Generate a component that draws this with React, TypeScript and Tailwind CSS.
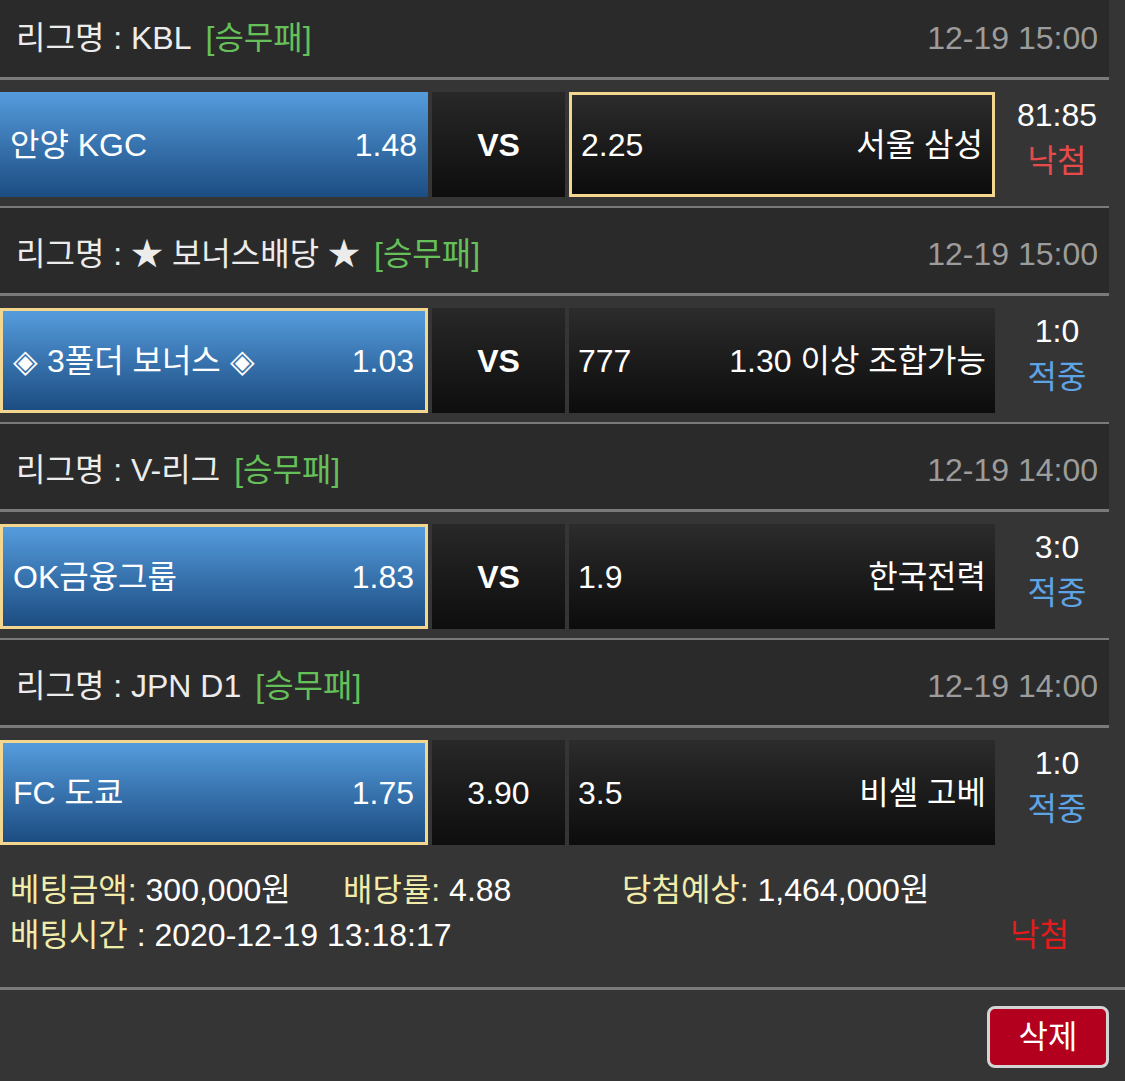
// Bet slip detail: league headers, match rows with picked side, totals and delete button.

type Side = "home" | "away" | "none";

interface Match {
  league: string;
  time: string;
  home: string;
  homeOdds: string;
  mid: string;
  midBold: boolean;
  awayOdds: string;
  away: string;
  picked: Side;
  score: string;
  result: "win" | "lose";
}

const matches: Match[] = [
  {
    league: "KBL",
    time: "12-19 15:00",
    home: "안양 KGC",
    homeOdds: "1.48",
    mid: "VS",
    midBold: true,
    awayOdds: "2.25",
    away: "서울 삼성",
    picked: "away",
    score: "81:85",
    result: "lose",
  },
  {
    league: "★ 보너스배당 ★",
    time: "12-19 15:00",
    home: "◈ 3폴더 보너스 ◈",
    homeOdds: "1.03",
    mid: "VS",
    midBold: true,
    awayOdds: "777",
    away: "1.30 이상 조합가능",
    picked: "home",
    score: "1:0",
    result: "win",
  },
  {
    league: "V-리그",
    time: "12-19 14:00",
    home: "OK금융그룹",
    homeOdds: "1.83",
    mid: "VS",
    midBold: true,
    awayOdds: "1.9",
    away: "한국전력",
    picked: "home",
    score: "3:0",
    result: "win",
  },
  {
    league: "JPN D1",
    time: "12-19 14:00",
    home: "FC 도쿄",
    homeOdds: "1.75",
    mid: "3.90",
    midBold: false,
    awayOdds: "3.5",
    away: "비셀 고베",
    picked: "home",
    score: "1:0",
    result: "win",
  },
];

const FONT = { fontFamily: '"Liberation Sans", "Noto Sans CJK KR", sans-serif' };

function LeagueHeader({ m }: { m: Match }) {
  return (
    <div className="flex h-[85px] w-[1109px] items-center justify-between bg-[#2a2a2a] pl-[16px] pr-[11px] pt-[6px]">
      <div className="text-[#ececec]">
        리그명 : {m.league}
        <span className="ml-[14px] text-[#66c05a]">[승무패]</span>
      </div>
      <div className="text-[#9c9c9c]">{m.time}</div>
    </div>
  );
}

function MatchRow({ m }: { m: Match }) {
  const homePicked = m.picked === "home";
  const awayPicked = m.picked === "away";
  return (
    <div className="flex h-[126px] gap-1 pt-3">
      <div
        className={
          "flex h-[105px] w-[428px] items-center justify-between bg-gradient-to-b from-[#559cdd] to-[#1c4d82] pl-[10px] pr-[11px] text-white " +
          (homePicked ? "border-[3px] border-[#f4d78e]" : "")
        }
      >
        <span>{m.home}</span>
        <span>{m.homeOdds}</span>
      </div>
      <div className="flex h-[105px] w-[133px] items-center justify-center bg-gradient-to-b from-[#282828] to-[#0e0e0e] text-white">
        <span className={m.midBold ? "font-bold" : ""}>{m.mid}</span>
      </div>
      <div
        className={
          "flex h-[105px] w-[426px] items-center justify-between bg-gradient-to-b from-[#2c2c2c] to-[#0c0c0c] pl-[9px] pr-[9px] text-white " +
          (awayPicked ? "border-[3px] border-[#f4d78e]" : "")
        }
      >
        <span>{m.awayOdds}</span>
        <span>{m.away}</span>
      </div>
      <div className="flex h-[105px] w-[116px] flex-col items-center leading-[46px]">
        <span className="text-white">{m.score}</span>
        <span className={m.result === "win" ? "text-[#5ea3e4]" : "text-[#e64a4a]"}>
          {m.result === "win" ? "적중" : "낙첨"}
        </span>
      </div>
    </div>
  );
}

export default function App() {
  return (
    <div className="h-[1081px] w-[1125px] overflow-hidden bg-[#353535] text-[32px] leading-none" style={FONT}>
      <div className="-mt-2">
        {matches.map((m, i) => (
          <div key={i}>
            {i > 0 && <div className="h-[2px] w-[1109px] bg-[#7a7a7a]" />}
            <LeagueHeader m={m} />
            <div className="h-[3px] w-[1109px] bg-[#7a7a7a]" />
            <MatchRow m={m} />
          </div>
        ))}
      </div>

      <div className="pl-[10px] pt-[14px] leading-[45px]">
        <div className="flex">
          <span className="w-[333px]">
            <span className="text-[#f2ecaa]">베팅금액:</span>
            <span className="text-white"> 300,000원</span>
          </span>
          <span className="w-[279px]">
            <span className="text-[#f2ecaa]">배당률:</span>
            <span className="text-white"> 4.88</span>
          </span>
          <span>
            <span className="text-[#f2ecaa]">당첨예상:</span>
            <span className="text-white"> 1,464,000원</span>
          </span>
        </div>
        <div className="flex">
          <span>
            <span className="text-[#f2ecaa]">배팅시간</span>
            <span className="text-white"> : 2020-12-19 13:18:17</span>
          </span>
          <span className="ml-auto mr-[56px] text-[#e21c1c]">낙첨</span>
        </div>
      </div>

      <div className="mt-[29px] h-[3px] w-full bg-[#7a7a7a]" />

      <div className="flex justify-end pr-[16px] pt-[16px]">
        <button className="flex h-[62px] w-[122px] items-center justify-center rounded-[8px] border-[3px] border-[#d4d4d4] bg-[#b2001e] text-white">
          삭제
        </button>
      </div>
    </div>
  );
}
